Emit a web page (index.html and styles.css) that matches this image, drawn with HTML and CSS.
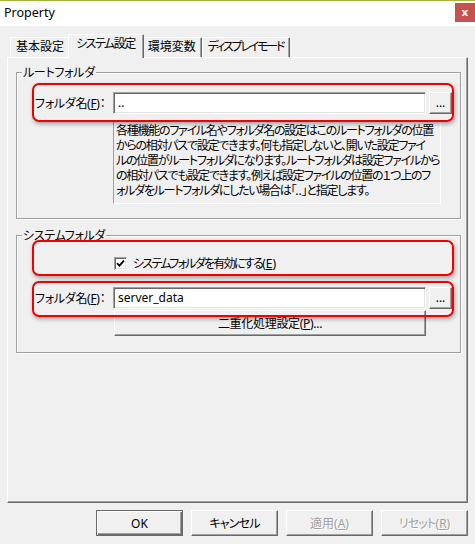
FILE: index.html
```html
<!DOCTYPE html>
<html lang="ja">
<head>
<meta charset="utf-8">
<title>Property</title>
<link rel="stylesheet" href="styles.css">
</head>
<body>
<div class="window">
  <header class="titlebar">
    <span class="title">Property</span>
    <span class="close">x</span>
  </header>
  <main class="main">
    <div class="tabs">
      <div class="tab">基本設定</div>
      <div class="tab tab-active tab-kana">システム設定</div>
      <div class="tab">環境変数</div>
      <div class="tab tab-kana-tight">ディスプレイモード</div>
    </div>
    <section class="panel">
      <fieldset class="group group-root">
        <legend class="group-title">ルートフォルダ</legend>
        <div class="row row-field">
          <label class="field-label">フォルダ名(<u>F</u>)：</label>
          <div class="textbox">..</div>
          <button class="btn btn-browse">...</button>
          <span class="annot annot-root"></span>
        </div>
        <div class="desc">各種機能のファイル名やフォルダ名の設定はこのルートフォルダの位置<br>からの相対パスで設定できます。何も指定しないと、開いた設定ファイ<br>ルの位置がルートフォルダになります。ルートフォルダは設定ファイルから<br>の相対パスでも設定できます。例えば設定ファイルの位置の１つ上のフ<br>ォルダをルートフォルダにしたい場合は「<span class="latin">..</span>」と指定します。</div>
      </fieldset>
      <fieldset class="group group-sys">
        <legend class="group-title">システムフォルダ</legend>
        <div class="row row-check">
          <span class="checkbox"><svg width="9" height="9" viewBox="0 0 9 9"><path d="M1 4.2 L3.4 6.6 L8 1.6" fill="none" stroke="#000" stroke-width="1.8"/></svg></span>
          <span class="check-label">システムフォルダを有効にする<span class="latin">(<u>E</u>)</span></span>
          <span class="annot annot-check"></span>
        </div>
        <div class="row row-field row-field2">
          <label class="field-label">フォルダ名(<u>F</u>)：</label>
          <div class="textbox">server_data</div>
          <button class="btn btn-browse">...</button>
          <span class="annot annot-field2"></span>
        </div>
        <button class="btn btn-wide">二重化処理設定(<u>P</u>)...</button>
      </fieldset>
    </section>
    <div class="footer">
      <button class="btn btn-foot btn-default">OK</button>
      <button class="btn btn-foot btn-kana">キャンセル</button>
      <button class="btn btn-foot btn-disabled">適用(<u>A</u>)</button>
      <button class="btn btn-foot btn-disabled btn-kana">リセット<span class="latin">(<u>R</u>)</span></button>
    </div>
  </main>
</div>
</body>
</html>
```
FILE: styles.css
```css
* { box-sizing: border-box; }
html, body { margin: 0; padding: 0; }
body {
  width: 475px;
  height: 544px;
  overflow: hidden;
  background: #f0f0f0;
  color: #000;
  font-family: "Noto Sans", "Noto Sans CJK JP", sans-serif;
  font-size: 12px;
  font-feature-settings: "palt";
}
.window { display: flex; flex-direction: column; height: 544px; }
.titlebar {
  height: 26px;
  border-top: 1px solid #a6b43c;
  background: #fff;
  display: flex;
  align-items: flex-start;
  justify-content: space-between;
}
.title { padding-left: 4px; line-height: 24px; font-size: 12.5px; }
.close {
  width: 20px;
  height: 19px;
  margin-top: 2px;
  background: #c75050;
  color: #fff;
  font-weight: bold;
  font-size: 11px;
  line-height: 17px;
  text-align: center;
}
.main { padding: 8px 7px 0; display: flex; flex-direction: column; }
.tabs {
  display: flex;
  align-items: flex-end;
  height: 23px;
  padding-left: 3px;
  position: relative;
  z-index: 1;
}
.tab {
  height: 20px;
  padding: 0 5px;
  line-height: 17px;
  white-space: nowrap;
  background: #f0f0f0;
  border-style: solid;
  border-width: 1px 1px 0 1px;
  border-color: #fff #696969 #fff #fff;
  box-shadow: inset -1px 0 0 #a0a0a0;
  border-top-left-radius: 1px;
  border-top-right-radius: 1px;
}
.tab-kana { letter-spacing: -1.5px; }
.tab-kana-tight { letter-spacing: -2.2px; padding: 0 6px 0 5px; }
.tab-active {
  height: 24px;
  margin: 0 -2px -1px;
  padding: 0 8px 0 7px;
  line-height: 18px;
  position: relative;
  z-index: 2;
}
.panel {
  height: 446px;
  border: 1px solid;
  border-color: #fff #696969 #696969 #fff;
  box-shadow: inset -1px -1px 0 #a0a0a0;
  display: flex;
  flex-direction: column;
}
.group {
  margin: 7px 0 0 8px;
  width: 445px;
  min-width: 0;
  padding: 0;
  border: 1px solid #a0a0a0;
  box-shadow: 1px 1px 0 #fff, inset 1px 1px 0 #fff;
}
.group-root { padding-bottom: 14px; }
.group-sys { margin-top: 9px; padding-bottom: 16px; }
.group-title {
  margin-left: 5px;
  padding: 0 1px;
  line-height: 15px;
  background: #f0f0f0;
  letter-spacing: -0.3px;
}
.row { display: flex; align-items: center; position: relative; }
.row-field { margin-top: 12px; height: 22px; padding-left: 18px; }
.row-field2 { margin-top: 16px; }
.field-label { width: 78px; white-space: nowrap; letter-spacing: -0.3px; }
.textbox {
  width: 313px;
  height: 22px;
  background: #fff;
  border: 1px solid;
  border-color: #a0a0a0 #fff #fff #a0a0a0;
  box-shadow: inset 1px 1px 0 #696969, inset -1px -1px 0 #e3e3e3;
  padding: 0 4px;
  line-height: 19px;
  white-space: nowrap;
}
.btn {
  font: inherit;
  color: #000;
  background: #f0f0f0;
  border: 1px solid;
  border-color: #fff #696969 #696969 #fff;
  box-shadow: inset -1px -1px 0 #a0a0a0;
  padding: 0;
  margin: 0;
  appearance: none;
  white-space: nowrap;
}
.btn-kana { letter-spacing: -0.8px; }
.btn-browse { margin-left: 3px; width: 23px; height: 22px; line-height: 16px; }
.desc {
  margin: 6px 0 0 96px;
  width: 328px;
  height: 84px;
  border: 1px solid;
  border-color: #a0a0a0 #fff #fff #a0a0a0;
  padding: 2px 0 0 2px;
  line-height: 15px;
  white-space: nowrap;
  letter-spacing: -1.25px;
  overflow: hidden;
}
.latin { letter-spacing: 0; }
.row-check { margin-top: 12px; height: 16px; padding-left: 97px; }
.checkbox {
  width: 13px;
  height: 13px;
  background: #fff;
  border: 1px solid;
  border-color: #a0a0a0 #fff #fff #a0a0a0;
  box-shadow: inset 1px 1px 0 #696969, inset -1px -1px 0 #e3e3e3;
  display: flex;
  align-items: center;
  justify-content: center;
}
.check-label { margin-left: 6px; white-space: nowrap; letter-spacing: -1.7px; }
.btn-wide { margin: 1px 0 0 97px; width: 312px; height: 26px; letter-spacing: -0.3px; }
.annot {
  position: absolute;
  left: 15px;
  width: 422px;
  border: 2px solid #f00000;
  border-radius: 7px;
  box-shadow: 1px 2px 4px rgba(0, 0, 0, 0.35);
  pointer-events: none;
  z-index: 3;
}
.annot-root { top: -9px; height: 39px; }
.annot-check { top: -15px; height: 36px; }
.annot-field2 { top: -6px; height: 36px; }
.footer {
  display: flex;
  justify-content: flex-end;
  gap: 8px;
  margin-top: 7px;
}
.btn-foot { width: 87px; height: 26px; }
.btn-default {
  border: 1px solid #696969;
  box-shadow: inset 1px 1px 0 #fff, inset -1px -1px 0 #696969, inset -2px -2px 0 #a0a0a0;
}
.btn-disabled { color: #a0a0a0; text-shadow: 1px 1px 0 #fff; }
```
